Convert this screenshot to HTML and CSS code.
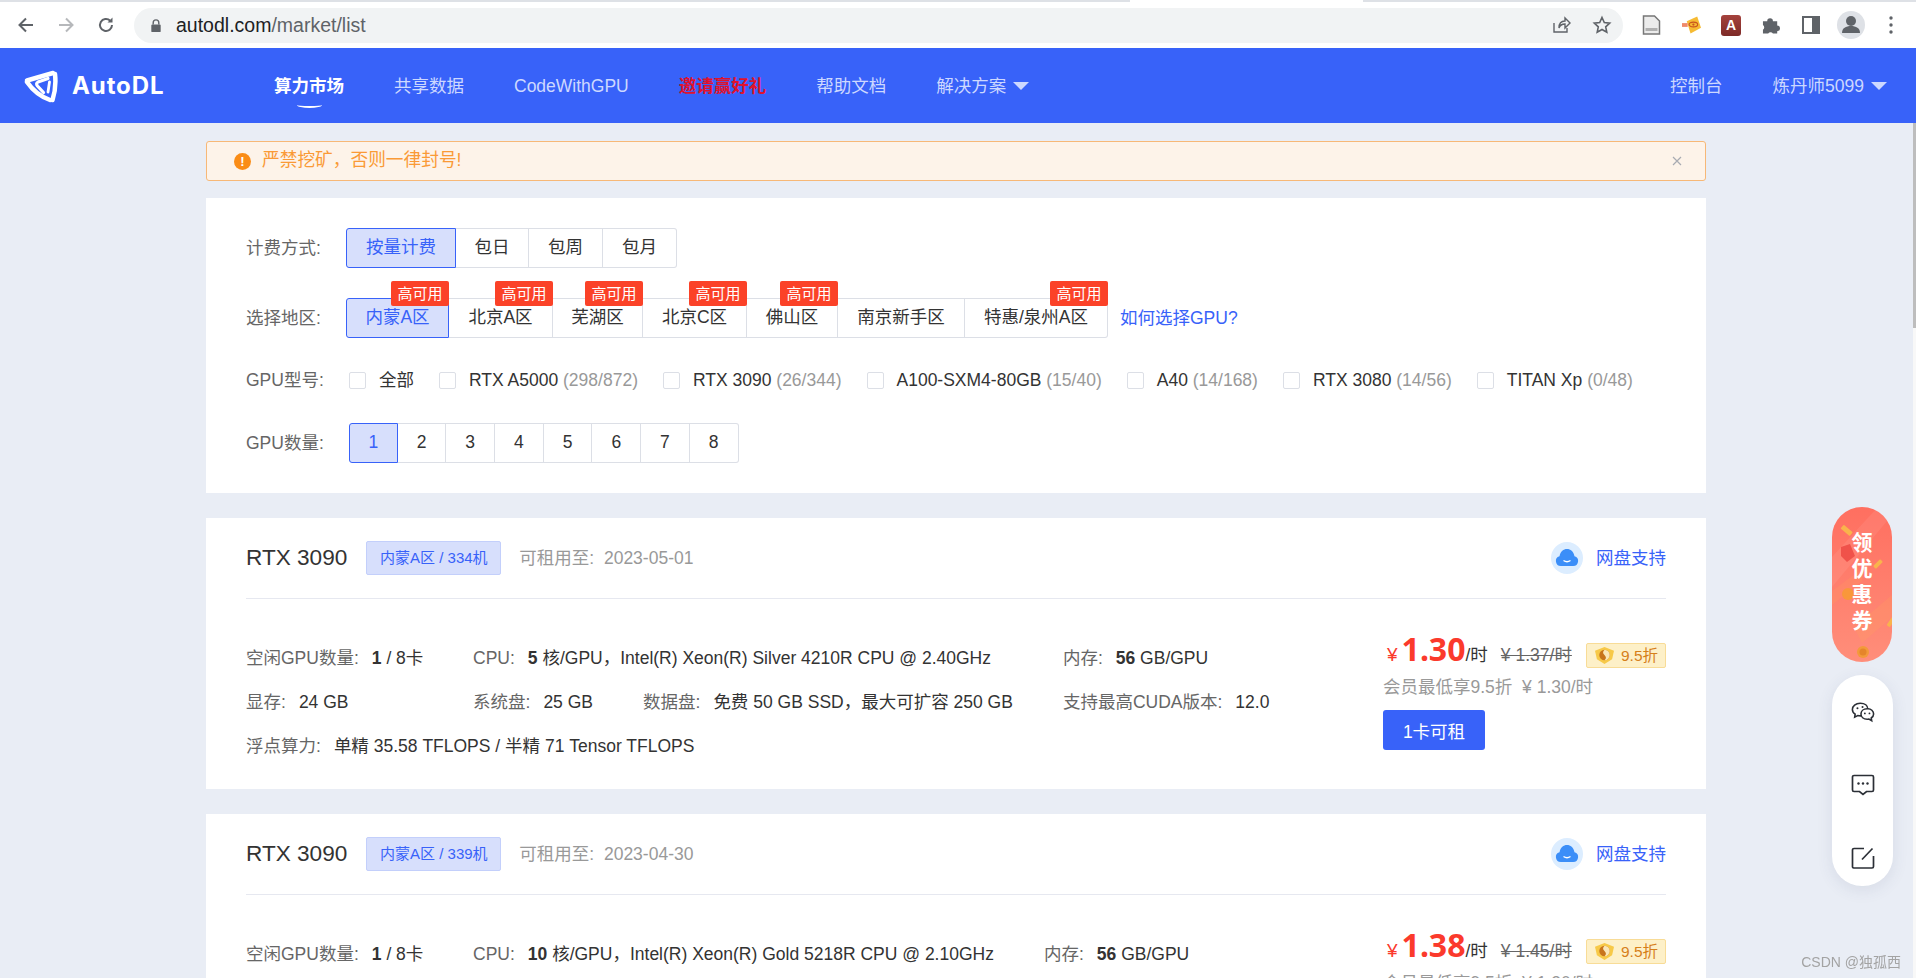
FILE: index.html
```html
<!DOCTYPE html>
<html lang="zh-CN">
<head>
    <meta charset="UTF-8">
    <title>AutoDL</title>
    <link rel="stylesheet" href="styles.css">
</head>
<body>
    <div class="tab-strip"></div>
    <div class="browser-bar">
        <div class="browser-nav">
            <svg class="bicon" viewBox="0 0 20 20"><path d="M17 10H4M10 3.5 3.5 10l6.5 6.500" fill="none" stroke="#5f6368" stroke-width="2"/></svg>
            <svg class="bicon" viewBox="0 0 20 20"><path d="M3 10h13M10 3.500l6.500 6.500-6.500 6.500" fill="none" stroke="#b6b8bb" stroke-width="2"/></svg>
            <svg class="bicon" viewBox="0 0 20 20"><path d="M16 10a6 6 0 1 1-1.800-4.300" fill="none" stroke="#5f6368" stroke-width="2"/><path d="M16.500 2.500v5h-5z" fill="#5f6368"/></svg>
        </div>
        <div class="address">
            <svg class="lock" viewBox="0 0 12 16"><path d="M3 7V5a3 3 0 0 1 6 0v2" fill="none" stroke="#5f6368" stroke-width="1.500"/><rect x="1" y="7" width="10" height="8" rx="1" fill="#5f6368"/></svg>
            <span class="url">autodl.com<span class="url-path">/market/list</span></span>
            <div class="address-actions">
                <svg class="bicon" viewBox="0 0 20 20"><path d="M3 8v9h13v-4M8 13c0-5 3-7 6-7V3l5 5-5 5V9c-3 0-5 1-6 4z" fill="none" stroke="#5f6368" stroke-width="1.400"/></svg>
                <svg class="bicon" viewBox="0 0 20 20"><path d="m10 2.500 2.300 5 5.400.6-4 3.700 1.100 5.400-4.800-2.700-4.800 2.700 1.100-5.400-4-3.700 5.400-.6z" fill="none" stroke="#5f6368" stroke-width="1.600"/></svg>
            </div>
        </div>
        <div class="browser-ext">
            <div class="ext-cell"><svg class="ext" viewBox="0 0 18 20"><path d="M1 1h11l5 5v13H1z" fill="#ececec" stroke="#777" stroke-width="1.500"/><rect x="3" y="13" width="12" height="3" fill="#b0b0b0"/></svg></div>
            <div class="ext-cell"><svg class="ext" viewBox="0 0 20 20"><path d="M5 6 16 1l4 12-11 6z" fill="#f6bb33"/><rect x="0" y="8" width="6" height="4" fill="#ef8a6a"/><ellipse cx="12" cy="9.500" rx="4.500" ry="2.500" fill="none" stroke="#c9561e" stroke-width="1.200"/><circle cx="12" cy="9.500" r="1.200" fill="#c9561e"/></svg></div>
            <div class="ext-cell"><div class="ext-a">A</div></div>
            <div class="ext-cell"><svg class="ext" viewBox="0 0 20 20"><path d="M1 6h4.500a3 3 0 0 1 6 0H16v4.500a3 3 0 0 1 0 6V19h-4.500a3 3 0 0 0-5 0H1v-4a3 3 0 0 0 0-5z" fill="#5f6368"/></svg></div>
            <div class="ext-cell"><div class="ext-panel"></div></div>
            <div class="ext-cell">
                <div class="avatar">
                    <svg viewBox="0 0 28 28"><circle cx="14" cy="10" r="5" fill="#5f6368"/><path d="M5 22c0-5 4-7 9-7s9 2 9 7z" fill="#5f6368"/></svg>
                </div>
            </div>
            <div class="ext-cell"><svg class="dots" viewBox="0 0 4 18"><circle cx="2" cy="2" r="1.700" fill="#5f6368"/><circle cx="2" cy="9" r="1.700" fill="#5f6368"/><circle cx="2" cy="16" r="1.700" fill="#5f6368"/></svg></div>
        </div>
    </div>

    <header class="navbar">
        <div class="logo">
            <svg class="logo-mark" viewBox="0 0 34 34" fill="none" stroke="#fff" stroke-linecap="round" stroke-linejoin="round">
                <path d="M3 11.500 29 4" stroke-width="4.500"/>
                <path d="M31 5Q32.500 19 28.500 31" stroke-width="4.500"/>
                <path d="M26 31Q12 26 3 13" stroke-width="4.500"/>
                <path d="M24 9.500 14 13Q11.500 14.500 13.500 17L19.500 23.500" stroke-width="3.200"/>
                <path d="M25.500 13 24 23" stroke-width="2.800"/>
            </svg>
            <span class="logo-text">AutoDL</span>
        </div>
        <nav class="nav-main">
            <a class="nav-item active">算力市场</a>
            <a class="nav-item">共享数据</a>
            <a class="nav-item">CodeWithGPU</a>
            <a class="nav-item invite">邀请赢好礼</a>
            <a class="nav-item">帮助文档</a>
            <a class="nav-item">解决方案<i class="caret"></i></a>
        </nav>
        <nav class="nav-right">
            <a class="nav-item">控制台</a>
            <a class="nav-item">炼丹师5099<i class="caret"></i></a>
        </nav>
    </header>

    <main class="content">
        <div class="alert">
            <span class="alert-icon">!</span>
            <span class="alert-text">严禁挖矿，否则一律封号!</span>
            <svg class="alert-close" viewBox="0 0 10 10"><path d="M1 1l8 8M9 1 1 9" stroke="#a8abb2" stroke-width="1.200" fill="none"/></svg>
        </div>

        <section class="filters">
            <div class="filter-row row-billing">
                <span class="filter-label">计费方式:</span>
                <div class="btn-group">
                    <span class="btn-item selected w-110">按量计费</span>
                    <span class="btn-item w-73">包日</span>
                    <span class="btn-item w-74">包周</span>
                    <span class="btn-item w-74">包月</span>
                </div>
            </div>
            <div class="filter-row row-region">
                <span class="filter-label">选择地区:</span>
                <div class="btn-group">
                    <span class="btn-item selected w-103">内蒙A区<b class="ha-badge">高可用</b></span>
                    <span class="btn-item w-104">北京A区<b class="ha-badge">高可用</b></span>
                    <span class="btn-item w-90">芜湖区<b class="ha-badge">高可用</b></span>
                    <span class="btn-item w-104">北京C区<b class="ha-badge">高可用</b></span>
                    <span class="btn-item w-91">佛山区<b class="ha-badge">高可用</b></span>
                    <span class="btn-item w-127">南京新手区</span>
                    <span class="btn-item w-143">特惠/泉州A区<b class="ha-badge">高可用</b></span>
                </div>
                <a class="help-link">如何选择GPU?</a>
            </div>
            <div class="filter-row row-model">
                <span class="filter-label">GPU型号:</span>
                <div class="check-list">
                    <label class="check-item"><i class="check-box"></i>全部</label>
                    <label class="check-item"><i class="check-box"></i>RTX A5000 <em>(298/872)</em></label>
                    <label class="check-item"><i class="check-box"></i>RTX 3090 <em>(26/344)</em></label>
                    <label class="check-item"><i class="check-box"></i>A100-SXM4-80GB <em>(15/40)</em></label>
                    <label class="check-item"><i class="check-box"></i>A40 <em>(14/168)</em></label>
                    <label class="check-item"><i class="check-box"></i>RTX 3080 <em>(14/56)</em></label>
                    <label class="check-item"><i class="check-box"></i>TITAN Xp <em>(0/48)</em></label>
                </div>
            </div>
            <div class="filter-row row-count">
                <span class="filter-label">GPU数量:</span>
                <div class="btn-group count-group">
                    <span class="btn-item selected">1</span>
                    <span class="btn-item">2</span>
                    <span class="btn-item">3</span>
                    <span class="btn-item">4</span>
                    <span class="btn-item">5</span>
                    <span class="btn-item">6</span>
                    <span class="btn-item">7</span>
                    <span class="btn-item">8</span>
                </div>
            </div>
        </section>

        <section class="gpu-card">
            <div class="card-head">
                <span class="gpu-name">RTX 3090</span>
                <span class="region-tag">内蒙A区 / 334机</span>
                <span class="rent-until">可租用至:&nbsp; 2023-05-01</span>
                <a class="disk-link">
                    <svg class="disk-icon" viewBox="0 0 32 32"><circle cx="16" cy="16" r="16" fill="#dcedff"/><path d="M10 24a5 5 0 0 1-1.500-9.800C9.500 9.500 12.500 7 16 7s6.500 2.500 7.500 7.200A5 5 0 0 1 22 24z" fill="#3b8ef8"/><path d="M12.500 18.500q3.500 2.500 7 0" fill="none" stroke="#fff" stroke-width="1.300"/></svg>
                    网盘支持
                </a>
            </div>
            <div class="card-body">
                <div class="spec-grid">
                    <div class="spec"><span>空闲GPU数量:</span><strong><b>1</b> / 8卡</strong></div>
                    <div class="spec wide"><span>CPU:</span><strong><b>5</b> 核/GPU，Intel(R) Xeon(R) Silver 4210R CPU @ 2.40GHz</strong></div>
                    <div class="spec"><span>内存:</span><strong><b>56</b> GB/GPU</strong></div>
                    <div class="spec"><span>显存:</span><strong>24 GB</strong></div>
                    <div class="spec wide disks">
                        <div class="spec"><span>系统盘:</span><strong>25 GB</strong></div>
                        <div class="spec"><span>数据盘:</span><strong>免费 50 GB SSD，最大可扩容 250 GB</strong></div>
                    </div>
                    <div class="spec"><span>支持最高CUDA版本:</span><strong>12.0</strong></div>
                    <div class="spec full"><span>浮点算力:</span><strong>单精 35.58 TFLOPS / 半精 71 Tensor TFLOPS</strong></div>
                </div>
                <div class="price-col">
                    <div class="price-row">
                        <span class="yen">¥</span><span class="price">1.30</span><span class="per">/时</span>
                        <del class="old-price">¥ 1.37/时</del>
                        <span class="discount">
                            <svg class="discount-icon" viewBox="0 0 22 20"><path d="M1 5 11 1l10 4-2 9-8 5-8-5z" fill="#f7c948"/><circle cx="11" cy="9.500" r="5.500" fill="#c8741c"/><path d="M11 4a5.500 5.500 0 0 1 0 11q3-2.500 0-5.500-3-2.500 0-5.500z" fill="#fae6b8"/></svg>
                            9.5折
                        </span>
                    </div>
                    <div class="member-price">会员最低享9.5折&nbsp; ¥ 1.30/时</div>
                    <button class="rent-btn">1卡可租</button>
                </div>
            </div>
        </section>

        <section class="gpu-card">
            <div class="card-head">
                <span class="gpu-name">RTX 3090</span>
                <span class="region-tag">内蒙A区 / 339机</span>
                <span class="rent-until">可租用至:&nbsp; 2023-04-30</span>
                <a class="disk-link">
                    <svg class="disk-icon" viewBox="0 0 32 32"><circle cx="16" cy="16" r="16" fill="#dcedff"/><path d="M10 24a5 5 0 0 1-1.500-9.800C9.500 9.500 12.500 7 16 7s6.500 2.500 7.500 7.200A5 5 0 0 1 22 24z" fill="#3b8ef8"/><path d="M12.500 18.500q3.500 2.500 7 0" fill="none" stroke="#fff" stroke-width="1.300"/></svg>
                    网盘支持
                </a>
            </div>
            <div class="card-body">
                <div class="spec-grid">
                    <div class="spec"><span>空闲GPU数量:</span><strong><b>1</b> / 8卡</strong></div>
                    <div class="spec wide"><span>CPU:</span><strong><b>10</b> 核/GPU，Intel(R) Xeon(R) Gold 5218R CPU @ 2.10GHz</strong></div>
                    <div class="spec"><span>内存:</span><strong><b>56</b> GB/GPU</strong></div>
                </div>
                <div class="price-col">
                    <div class="price-row">
                        <span class="yen">¥</span><span class="price">1.38</span><span class="per">/时</span>
                        <del class="old-price">¥ 1.45/时</del>
                        <span class="discount">
                            <svg class="discount-icon" viewBox="0 0 22 20"><path d="M1 5 11 1l10 4-2 9-8 5-8-5z" fill="#f7c948"/><circle cx="11" cy="9.500" r="5.500" fill="#c8741c"/><path d="M11 4a5.500 5.500 0 0 1 0 11q3-2.500 0-5.500-3-2.500 0-5.500z" fill="#fae6b8"/></svg>
                            9.5折
                        </span>
                    </div>
                    <div class="member-price">会员最低享9.5折&nbsp; ¥ 1.30/时</div>
                </div>
            </div>
        </section>
    </main>

    <aside class="float-bar">
        <div class="coupon">
            <svg class="coupon-art" viewBox="0 0 60 155">
                <path d="M60 8 44 2 0 50v30z" fill="#fff" opacity="0.07"/>
                <path d="M60 88 22 120l8 16 30-26z" fill="#ffa35a" opacity="0.22"/>
                <path d="M30 62 0 84v14l30-24z" fill="#ffa35a" opacity="0.2"/>
                <rect x="9" y="21" width="12" height="5" rx="1" transform="rotate(40 15 23)" fill="#f9b34c"/>
                <rect x="41" y="55" width="10" height="4" rx="1" transform="rotate(-45 46 57)" fill="#f9b34c"/>
                <rect x="54" y="113" width="10" height="4" rx="1" transform="rotate(-55 59 115)" fill="#f9b34c"/>
                <path d="M9 40l9-3 5 12-8 6-6-6z" fill="#f0524a"/>
                <circle cx="16" cy="87" r="6" fill="#f9973a"/>
                <circle cx="31" cy="145" r="6" fill="#f39a3a"/>
                <circle cx="31" cy="145" r="3.500" fill="#e5852b"/>
            </svg>
            <span class="coupon-text">领<br>优<br>惠<br>券</span>
        </div>
        <div class="tools">
            <svg class="tool-icon" viewBox="0 0 26 22"><path d="M10 1.500C5 1.500 1.500 4.500 1.500 8.200c0 2.200 1.200 4 3 5.200L4 16.500l3.300-1.700c1 .3 2 .4 3 .4 4.500 0 8-3 8-7S15 1.500 10 1.500z" fill="#fff" stroke="#2b2f36" stroke-width="1.700"/><path d="M17.500 7.500c-4 0-6.700 2.500-6.700 5.700s2.700 5.700 6.700 5.700c.7 0 1.300-.1 1.900-.2l3 1.800-.5-3c1.600-1.100 2.600-2.600 2.600-4.300 0-3.200-3-5.700-6-5.700z" fill="#fff" stroke="#2b2f36" stroke-width="1.700"/><circle cx="7" cy="7" r="1.100" fill="#2b2f36"/><circle cx="12.500" cy="5.500" r="1.100" fill="#2b2f36"/><circle cx="15" cy="12.500" r="1" fill="#2b2f36"/><circle cx="20" cy="12.500" r="1" fill="#2b2f36"/></svg>
            <svg class="tool-icon" viewBox="0 0 24 22"><path d="M3 1.500h18A1.500 1.500 0 0 1 22.500 3v13a1.500 1.500 0 0 1-1.500 1.500h-5.500L12 20.500l-3.500-3H3A1.500 1.500 0 0 1 1.500 16V3A1.500 1.500 0 0 1 3 1.500z" fill="none" stroke="#2b2f36" stroke-width="1.700"/><circle cx="7.500" cy="9.500" r="1.200" fill="#2b2f36"/><circle cx="12" cy="9.500" r="1.200" fill="#2b2f36"/><circle cx="16.500" cy="9.500" r="1.200" fill="#2b2f36"/></svg>
            <svg class="tool-icon" viewBox="0 0 24 22"><path d="M13 1.500H3A1.500 1.500 0 0 0 1.500 3v17A1.500 1.500 0 0 0 3 21h18a1.500 1.500 0 0 0 1.500-1.500V9" fill="none" stroke="#2b2f36" stroke-width="1.700"/><path d="M11 12.500 21.500 1.500" fill="none" stroke="#2b2f36" stroke-width="1.700"/></svg>
        </div>
    </aside>

    <div class="scroll-track"><div class="scroll-thumb"></div></div>
    <div class="watermark">CSDN @独孤西</div>
</body>
</html>
```

FILE: styles.css
```css
html, body {
    margin: 0;
    padding: 0;
    height: 100%;
    overflow: hidden;
}

body {
    background-color: #e9edf5;
    color: #333;
    font-family: "Liberation Sans", "Noto Sans CJK SC", sans-serif;
    font-size: 17.500px;
    line-height: 24px;
}

/* browser chrome */
.tab-strip {
    height: 2px;
    background: linear-gradient(90deg, #dee1e6 1130px, #fff 1130px, #fff 1363px, #dee1e6 1363px);
}

.browser-bar {
    height: 46px;
    background-color: #fff;
    display: flex;
    align-items: center;
}

.browser-nav {
    display: flex;
    gap: 20px;
    padding-left: 16px;
    width: 134px;
    box-sizing: border-box;
}

.bicon {
    width: 20px;
    height: 20px;
}

.address {
    width: 1489px;
    height: 35px;
    border-radius: 18px;
    background-color: #f1f3f4;
    display: flex;
    align-items: center;
    padding-left: 16px;
    box-sizing: border-box;
}

.lock {
    width: 12px;
    height: 15px;
    margin-right: 14px;
}

.url {
    font-size: 19.500px;
    color: #202124;
}

.url-path {
    color: #5f6368;
}

.address-actions {
    margin-left: auto;
    display: flex;
    gap: 21px;
    padding-right: 11px;
}

.browser-ext {
    display: flex;
    align-items: center;
    padding-left: 8px;
}

.ext-cell {
    width: 40px;
    display: flex;
    justify-content: center;
    align-items: center;
}

.ext {
    width: 19px;
    height: 20px;
}

.ext-a {
    width: 20px;
    height: 21px;
    border-radius: 3px;
    background: linear-gradient(180deg, #a5423d, #7d2a27);
    color: #fff;
    font-size: 14px;
    font-weight: bold;
    text-align: center;
    line-height: 21px;
}

.ext-panel {
    width: 18px;
    height: 18px;
    box-sizing: border-box;
    border: 2px solid #5f6368;
    border-right-width: 8px;
    background-color: #fff;
}

.avatar {
    width: 28px;
    height: 28px;
    border-radius: 50%;
    background-color: #dee1e6;
}

.dots {
    width: 4px;
    height: 18px;
}

/* top navigation */
.navbar {
    height: 75px;
    background-color: #3862f9;
    display: flex;
    align-items: center;
    color: #cdd8ff;
}

.logo {
    display: flex;
    align-items: center;
    gap: 14px;
    padding-left: 24px;
    width: 274px;
    box-sizing: border-box;
}

.logo-mark {
    width: 34px;
    height: 34px;
}

.logo-text {
    color: #fff;
    font-family: "Inter", "Liberation Sans", sans-serif;
    font-weight: 700;
    font-size: 24px;
    letter-spacing: 0.9px;
}

.nav-main, .nav-right {
    display: flex;
    gap: 50px;
}

.nav-right {
    margin-left: auto;
    padding-right: 29px;
}

.nav-item {
    position: relative;
    white-space: nowrap;
}

.nav-item.active {
    color: #fff;
    font-weight: bold;
}

.nav-item.active::after {
    content: "";
    position: absolute;
    left: 23px;
    top: 28px;
    width: 25px;
    height: 6px;
    border-bottom: 2px solid #fff;
    border-radius: 0 0 50% 50%;
    box-sizing: border-box;
}

.nav-item.invite {
    color: #e0122c;
    font-weight: bold;
}

.caret {
    display: inline-block;
    margin-left: 7px;
    border-left: 8px solid transparent;
    border-right: 8px solid transparent;
    border-top: 8px solid #cdd8ff;
    vertical-align: 2px;
}

/* page content */
.content {
    width: 1500px;
    margin-left: 206px;
    padding-top: 18px;
}

.alert {
    height: 40px;
    box-sizing: border-box;
    display: flex;
    align-items: center;
    padding: 0 23px 0 27px;
    background-color: #fdf3e9;
    border: 1px solid #f7b877;
    border-radius: 3px;
    color: #fa9a36;
    font-size: 17.700px;
}

.alert-icon {
    width: 17px;
    height: 17px;
    border-radius: 50%;
    background-color: #fa8c16;
    color: #fff;
    font-size: 13px;
    font-weight: bold;
    text-align: center;
    line-height: 17px;
    margin-right: 11px;
}

.alert-text {
    padding-bottom: 3px;
}

.alert-close {
    width: 10px;
    height: 10px;
    margin-left: auto;
}

.filters {
    margin-top: 17px;
    background-color: #fff;
    padding: 30px 40px;
    height: 295px;
    box-sizing: border-box;
}

.filter-row {
    display: flex;
    align-items: center;
    height: 40px;
}

.row-billing { margin-bottom: 30px; }
.row-region { margin-bottom: 22px; }
.row-model { margin-bottom: 23px; }

.filter-label {
    width: 100px;
    flex-shrink: 0;
    color: #666;
}

.btn-group {
    display: flex;
}

.btn-item {
    position: relative;
    height: 40px;
    box-sizing: border-box;
    display: flex;
    align-items: center;
    justify-content: center;
    border: 1px solid #dcdfe6;
    border-left: 0;
    background-color: #fff;
    padding-bottom: 3px;
}

.btn-item:first-child {
    border-left: 1px solid #dcdfe6;
    border-radius: 3px 0 0 3px;
}

.btn-item:last-child {
    border-radius: 0 3px 3px 0;
}

.btn-item.selected {
    background-color: #d7dffc;
    border: 1px solid #3862f9;
    color: #3862f9;
}

.w-90 { width: 90px; }
.w-91 { width: 91px; }
.w-73 { width: 73px; }
.w-74 { width: 74px; }
.w-103 { width: 103px; }
.w-104 { width: 104px; }
.w-110 { width: 110px; }
.w-127 { width: 127px; }
.w-143 { width: 143px; }

.ha-badge {
    position: absolute;
    right: -1px;
    top: -18px;
    width: 58px;
    height: 25px;
    border-radius: 2px;
    background-color: #fb4228;
    color: #fff;
    font-size: 15px;
    font-weight: normal;
    line-height: 25px;
    text-align: center;
}

.help-link {
    margin-left: 12px;
    color: #3862f9;
}

.check-list {
    display: flex;
    gap: 25px;
    margin-left: 3px;
}

.check-item {
    display: flex;
    align-items: center;
    white-space: pre;
}

.check-item em {
    font-style: normal;
    color: #999;
}

.check-box {
    width: 17px;
    height: 17px;
    box-sizing: border-box;
    border: 1px solid #dcdfe6;
    border-radius: 2px;
    margin-right: 13px;
    background-color: #fff;
}

.count-group {
    margin-left: 3px;
}

.count-group .btn-item {
    width: 48.700px;
}

/* gpu cards */
.gpu-card {
    margin-top: 25px;
    background-color: #fff;
    height: 271px;
    padding: 0 40px;
    box-sizing: border-box;
}

.card-head {
    height: 80px;
    display: flex;
    align-items: center;
    border-bottom: 1px solid #e6e8f0;
}

.gpu-name {
    font-size: 22.600px;
    margin-right: 19px;
}

.region-tag {
    width: 135px;
    height: 34px;
    box-sizing: border-box;
    display: flex;
    align-items: center;
    justify-content: center;
    border: 1px solid #c3cffb;
    border-radius: 2px;
    background-color: #d7dffc;
    color: #3862f9;
    font-size: 15px;
}

.rent-until {
    margin-left: 18px;
    color: #999;
}

.disk-link {
    margin-left: auto;
    display: flex;
    align-items: center;
    gap: 13px;
    color: #3862f9;
}

.disk-icon {
    width: 32px;
    height: 32px;
}

.card-body {
    display: flex;
    justify-content: space-between;
}

.spec-grid {
    display: grid;
    grid-template-columns: 227px auto auto;
    justify-content: start;
    align-content: start;
    grid-auto-rows: 44px;
    padding-top: 47px;
}

.spec {
    display: flex;
    align-items: baseline;
    white-space: nowrap;
}

.spec > span {
    color: #666;
    margin-right: 13px;
}

.spec strong {
    font-weight: normal;
    color: #333;
}

.spec strong b {
    font-weight: bold;
}

.spec.wide {
    padding-right: 50px;
}

.spec.disks {
    gap: 50px;
}

.spec.full {
    grid-column: 1 / -1;
}

.price-col {
    width: 283px;
    padding-top: 34px;
}

.price-row {
    display: flex;
    align-items: baseline;
    height: 35px;
}

.yen {
    color: #fb3a2c;
    font-size: 19px;
    margin-left: 4px;
    margin-right: 4px;
}

.price {
    color: #fb3a2c;
    font-family: "Noto Sans", sans-serif;
    font-size: 32px;
    font-weight: bold;
    line-height: 1;
}

.old-price {
    margin-left: 13px;
    color: #666;
}

.discount {
    align-self: flex-end;
    margin-left: auto;
    width: 80px;
    height: 25px;
    box-sizing: border-box;
    display: flex;
    align-items: center;
    justify-content: center;
    gap: 6px;
    border: 1px solid #f8dc97;
    border-radius: 2px;
    background-color: #fdf0c8;
    color: #d67f1a;
    font-size: 15.500px;
}

.discount-icon {
    width: 21px;
    height: 19px;
}

.member-price {
    margin-top: 7px;
    color: #999;
}

.rent-btn {
    margin-top: 11px;
    width: 102px;
    height: 40px;
    border: none;
    border-radius: 3px;
    background-color: #3862f9;
    color: #fff;
    font-family: inherit;
    font-size: 17.500px;
}

/* floating side bar */
.float-bar {
    position: fixed;
    left: 1832px;
    top: 507px;
    width: 61px;
    display: flex;
    flex-direction: column;
    gap: 13px;
}

.coupon {
    position: relative;
    width: 60px;
    height: 155px;
    box-sizing: border-box;
    border-radius: 30px;
    overflow: hidden;
    background: linear-gradient(180deg, #ff6f60, #ff8e7a);
    color: #fff;
    font-weight: bold;
    font-size: 21px;
    line-height: 26px;
    text-align: center;
    padding-top: 23px;
}

.coupon-art {
    position: absolute;
    left: 0;
    top: 0;
    width: 60px;
    height: 155px;
}

.coupon-text {
    position: relative;
}

.tools {
    height: 211px;
    box-sizing: border-box;
    border-radius: 30px;
    background-color: #fff;
    box-shadow: 0 4px 16px rgba(60, 70, 110, 0.1);
    display: flex;
    flex-direction: column;
    align-items: center;
    justify-content: space-between;
    padding: 26px 0 17px;
}

.tool-icon {
    width: 24px;
    height: 22px;
}

.scroll-track {
    position: fixed;
    left: 1913px;
    top: 123px;
    bottom: 0;
    width: 3px;
    background-color: #f8f8f8;
}

.scroll-thumb {
    height: 205px;
    background-color: #bdbdbd;
}

.watermark {
    position: fixed;
    right: 15px;
    top: 950px;
    color: #a3a3a3;
    font-size: 14px;
}
```
